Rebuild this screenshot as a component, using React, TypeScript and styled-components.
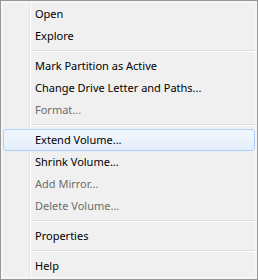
import React from "react";
import styled, { createGlobalStyle } from "styled-components";

const Global = createGlobalStyle`
  html, body { margin: 0; padding: 0; background: #ffffff; }
  body { font-family: "Noto Sans", "Liberation Sans", sans-serif; }
`;

const Menu = styled.div`
  width: 258px;
  height: 280px;
  box-sizing: border-box;
  border: 1px solid #979797;
  background: #f0f0f0;
  padding: 2px;
  box-shadow: inset 0 0 0 2px #f5f5f5;
  position: relative;
  display: flex;
  flex-direction: column;
  font-size: 11px;
`;

const Gutter = styled.div`
  position: absolute;
  top: 2px;
  bottom: 2px;
  left: 28px;
  width: 1px;
  background: #e2e3e3;
  border-right: 1px solid #ffffff;
`;

const Item = styled.div<{ $disabled?: boolean; $active?: boolean }>`
  height: 22px;
  box-sizing: border-box;
  display: flex;
  align-items: center;
  padding: 0 0 1px 31px;
  color: ${(p) => (p.$disabled ? "#6d6d6d" : "#000000")};
  position: relative;
  border-radius: 3px;
  border: 1px solid ${(p) => (p.$active ? "#aecff7" : "transparent")};
  background: ${(p) =>
    p.$active ? "linear-gradient(to bottom, #f2f7fd, #e3eefb)" : "transparent"};
  z-index: 1;
  white-space: nowrap;
`;

const Separator = styled.div`
  height: 8px;
  box-sizing: border-box;
  padding: 3px 0 0 28px;
  & > div {
    height: 1px;
    background: #e0e0e0;
    border-bottom: 1px solid #ffffff;
  }
`;

type Entry = { label?: string; disabled?: boolean; active?: boolean; sep?: boolean };

const entries: Entry[] = [
  { label: "Open" },
  { label: "Explore" },
  { sep: true },
  { label: "Mark Partition as Active" },
  { label: "Change Drive Letter and Paths..." },
  { label: "Format...", disabled: true },
  { sep: true },
  { label: "Extend Volume...", active: true },
  { label: "Shrink Volume..." },
  { label: "Add Mirror...", disabled: true },
  { label: "Delete Volume...", disabled: true },
  { sep: true },
  { label: "Properties" },
  { sep: true },
  { label: "Help" },
];

export default function App() {
  return (
    <>
      <Global />
      <Menu>
        <Gutter />
        {entries.map((e, i) =>
          e.sep ? (
            <Separator key={i}>
              <div />
            </Separator>
          ) : (
            <Item key={i} $disabled={e.disabled} $active={e.active}>
              {e.label}
            </Item>
          )
        )}
      </Menu>
    </>
  );
}
